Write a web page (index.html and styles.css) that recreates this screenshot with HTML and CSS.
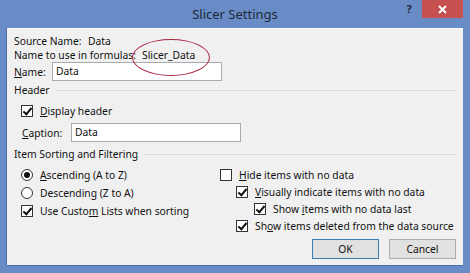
FILE: index.html
```html
<!DOCTYPE html>
<html lang="en">
<head>
    <meta charset="UTF-8">
    <title>Slicer Settings</title>
    <link rel="stylesheet" href="styles.css">
</head>
<body>
    <div class="window">
        <div class="titlebar">
            <span></span>
            <span class="title">Slicer Settings</span>
            <div class="controls">
                <span class="help">?</span>
                <span class="close">
                    <svg width="9" height="9" viewBox="0 0 9 9"><path d="M1 1 L8 8 M8 1 L1 8" stroke="#fff" stroke-width="2"/></svg>
                </span>
            </div>
        </div>

        <div class="client">
            <div class="infoRow">
                <span class="infoLabel">Source Name:</span>
                <span>Data</span>
            </div>
            <div class="infoRow">
                <span class="infoLabel wide">Name to use in formulas:</span>
                <span class="slicerName">Slicer_Data<span class="circle"></span></span>
            </div>
            <div class="fieldRow">
                <label class="nameLabel"><u>N</u>ame:</label>
                <div class="textBox">Data</div>
            </div>

            <div class="groupTitle"><span>Header</span><div class="line"></div></div>
            <div class="checkRow indent1">
                <span class="check on"></span><span><u>D</u>isplay header</span>
            </div>
            <div class="fieldRow caption">
                <label class="captionLabel"><u>C</u>aption:</label>
                <div class="textBox">Data</div>
            </div>

            <div class="groupTitle sorting"><span>Item Sorting and Filtering</span><div class="line"></div></div>
            <div class="columns">
                <div class="leftCol">
                    <div class="checkRow"><span class="radio on"></span><span><u>A</u>scending (A to Z)</span></div>
                    <div class="checkRow"><span class="radio"></span><span>Descendin<u>g</u> (Z to A)</span></div>
                    <div class="checkRow"><span class="check on"></span><span>Use Custo<u>m</u> Lists when sorting</span></div>
                </div>
                <div class="rightCol">
                    <div class="checkRow"><span class="check"></span><span><u>H</u>ide items with no data</span></div>
                    <div class="checkRow sub"><span class="check on"></span><span><u>V</u>isually indicate items with no data</span></div>
                    <div class="checkRow subsub"><span class="check on"></span><span>Show <u>i</u>tems with no data last</span></div>
                    <div class="checkRow sub"><span class="check on"></span><span>Sh<u>o</u>w items deleted from the data source</span></div>
                </div>
            </div>

            <div class="buttons">
                <button class="default">OK</button>
                <button>Cancel</button>
            </div>
        </div>
    </div>
</body>
</html>
```

FILE: styles.css
```css
body {
    margin: 0;
    font-family: 'Noto Sans', sans-serif;
    font-size: 10.3px;
    color: #111;
    white-space: nowrap;
}

.window {
    width: 470px;
    height: 273px;
    box-sizing: border-box;
    background: #6a8cc6;
    padding: 0 7px 8px 7px;
}

.titlebar {
    height: 28px;
    display: grid;
    grid-template-columns: 1fr auto 1fr;
}

.title {
    align-self: center;
    font-size: 13px;
    color: #1c2a3c;
    margin-top: -1px;
}

.controls {
    justify-self: end;
    display: flex;
    height: 18px;
}

.help {
    width: 26px;
    text-align: center;
    font-weight: bold;
    font-size: 11px;
    line-height: 18px;
    color: #1c2a3c;
}

.close {
    width: 41px;
    background: #c75050;
    display: flex;
    align-items: center;
    justify-content: center;
}

.client {
    height: 237px;
    box-sizing: border-box;
    background: #f0f0f0;
    border-top: 1px solid #fafafa;
    box-shadow: -1px 0 0 #4f72ab, 0 1px 0 #4f72ab;
    padding: 5px 7px 0 7px;
}

.infoRow {
    display: flex;
    height: 14px;
    line-height: 14px;
}

.infoLabel {
    width: 74px;
}

.infoLabel.wide {
    width: 128px;
}

.slicerName {
    position: relative;
}

.circle {
    position: absolute;
    left: -10px;
    top: -9px;
    width: 76px;
    height: 35px;
    border: 1px solid #a8223c;
    border-radius: 50%;
}

.fieldRow {
    display: flex;
    align-items: center;
    height: 19px;
}

.nameLabel {
    width: 38px;
}

.caption {
    margin-top: 3px;
    padding-left: 8px;
}

.captionLabel {
    width: 49px;
}

.textBox {
    width: 170px;
    height: 19px;
    box-sizing: border-box;
    border: 1px solid #a9abb2;
    background: #fff;
    padding-left: 3px;
    line-height: 17px;
}

.groupTitle {
    display: flex;
    align-items: center;
    gap: 6px;
    height: 14px;
    margin-top: 2px;
}

.groupTitle .line {
    flex: 1;
    height: 1px;
    background: #dcdcdc;
}

.groupTitle.sorting {
    margin-top: 5px;
}

.checkRow {
    display: flex;
    align-items: center;
    gap: 7px;
    height: 18px;
}

.indent1 {
    margin-top: 5px;
    padding-left: 7px;
}

.check, .radio {
    width: 12px;
    height: 12px;
    box-sizing: border-box;
    border: 1px solid #333;
    background: #fff;
    flex-shrink: 0;
    position: relative;
}

.check.on::after {
    content: "";
    position: absolute;
    left: 3px;
    top: 0px;
    width: 3px;
    height: 7px;
    border-right: 2px solid #111;
    border-bottom: 2px solid #111;
    transform: rotate(40deg);
}

.radio {
    border-radius: 50%;
}

.radio.on::after {
    content: "";
    position: absolute;
    left: 2px;
    top: 2px;
    width: 6px;
    height: 6px;
    border-radius: 50%;
    background: #111;
}

.columns {
    display: grid;
    grid-template-columns: 206px 1fr;
    margin-top: 5px;
}

.leftCol {
    padding-left: 7px;
}

.rightCol .checkRow {
    height: 17px;
}

.rightCol .sub {
    padding-left: 16px;
}

.rightCol .subsub {
    padding-left: 34px;
}

.buttons {
    display: flex;
    justify-content: flex-end;
    gap: 10px;
    margin-top: 5px;
}

button {
    width: 67px;
    height: 20px;
    border: 1px solid #adadad;
    background: #e1e1e1;
    font-family: 'Noto Sans', sans-serif;
    font-size: 10.3px;
    color: #111;
    padding: 0;
}

button.default {
    border-color: #3c7fb1;
}
```
